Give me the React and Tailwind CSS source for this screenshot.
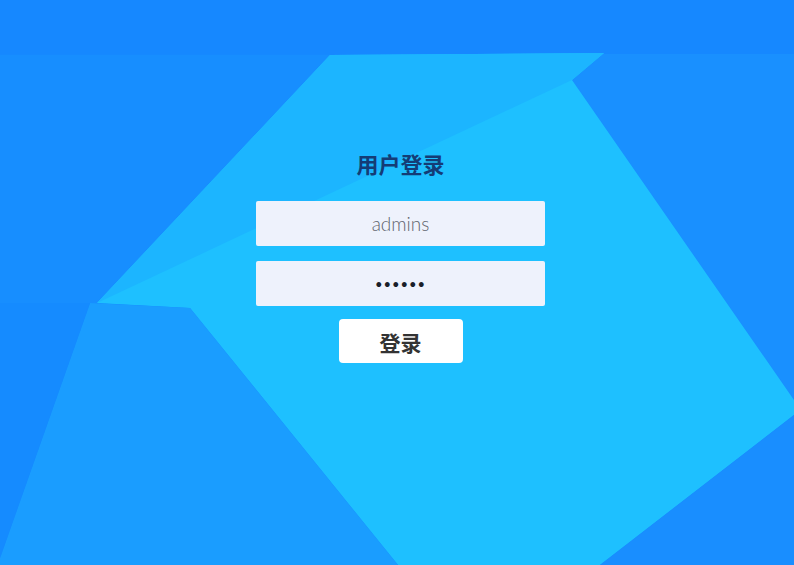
import React from "react";

function Background() {
  return (
    <svg
      className="absolute inset-0 h-full w-full"
      viewBox="0 0 794 565"
      preserveAspectRatio="none"
      aria-hidden="true"
    >
      <rect x="0" y="0" width="794" height="565" fill="#1689ff" />
      <polygon points="0,55 330,55 97,303 0,303" fill="#178eff" />
      <polygon points="604,53 794,53 794,400 572,80" fill="#1990ff" />
      <rect x="0" y="0" width="794" height="54" fill="#1688ff" />
      <polygon
        points="330,55 604,53 572,80 794,400 794,415 600,565 398,565 190,308 97,303"
        fill="#1ec0ff"
      />
      <polygon points="330,55 604,53 572,80 97,303" fill="#1cb5ff" />
      <polygon points="90,303 190,308 398,565 0,565 0,558" fill="#1a9dff" />
      <polygon points="0,303 90,303 0,558" fill="#158bff" />
      <polygon points="794,415 600,565 794,565" fill="#198eff" />
    </svg>
  );
}

export default function App() {
  return (
    <div className="relative h-[565px] w-full overflow-hidden">
      <Background />
      <div className="relative flex flex-col items-center pl-[7px] pt-[148px]">
        <h1
          className="text-[22px] leading-[30px] font-bold text-[#143c76]"
          style={{ fontFamily: '"Noto Sans CJK SC", "Noto Sans", sans-serif' }}
        >
          用户登录
        </h1>
        <div className="mt-[23px] flex w-[289px] flex-col gap-[15px]">
          <input
            type="text"
            defaultValue="admins"
            className="h-[45px] w-full rounded-[2px] bg-[#eef2fc] text-center text-[19px] font-light text-[#5f656e] outline-none"
            style={{ fontFamily: 'Lato, "Open Sans", sans-serif' }}
          />
          <input
            type="password"
            defaultValue="123456"
            className="h-[45px] w-full rounded-[2px] bg-[#eef2fc] text-center text-[13px] tracking-[1px] text-[#1a1f2a] outline-none"
            style={{ fontFamily: 'Lato, "Open Sans", sans-serif' }}
          />
        </div>
        <button
          type="button"
          className="mt-[13px] flex h-[44px] w-[124px] items-center justify-center rounded-[4px] bg-white pt-[4px] text-[21px] font-bold text-[#333333]"
          style={{ fontFamily: '"Noto Sans CJK SC", "Noto Sans", sans-serif' }}
        >
          登录
        </button>
      </div>
    </div>
  );
}
